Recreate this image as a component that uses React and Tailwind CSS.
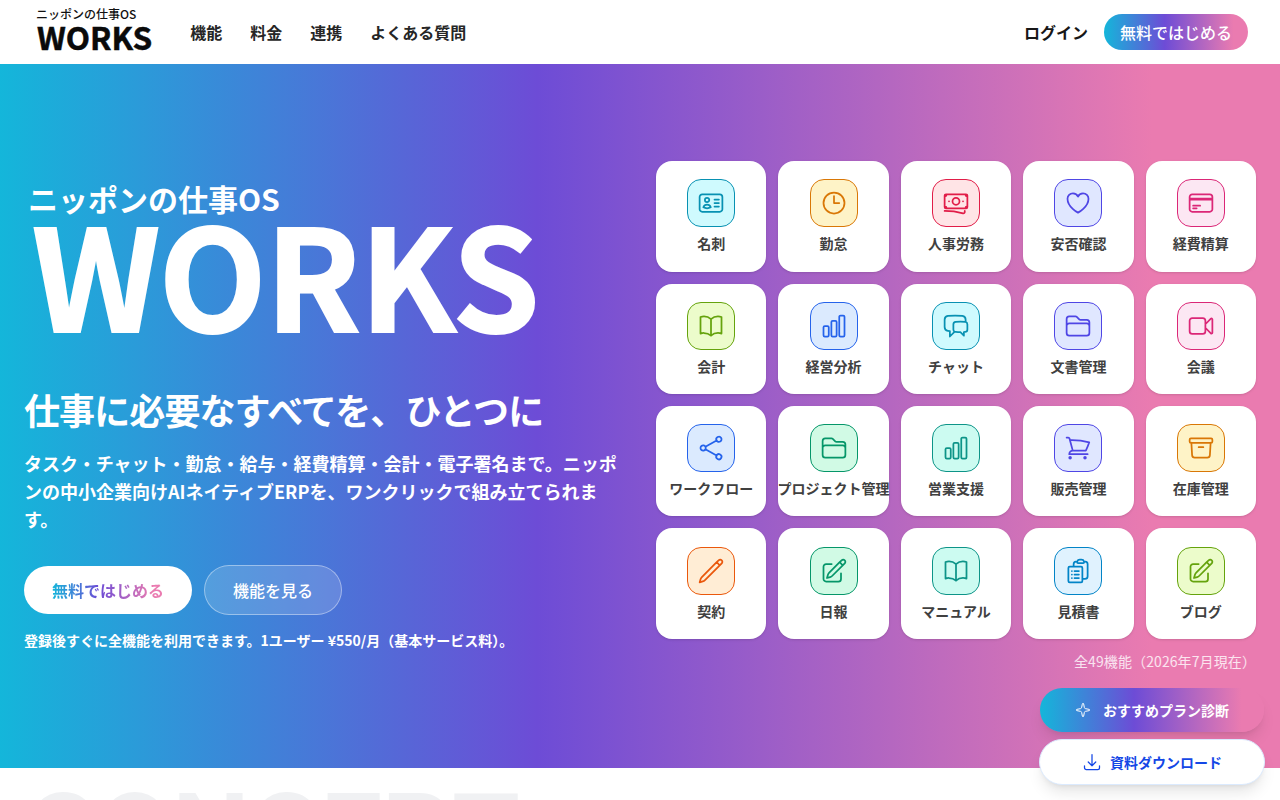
import {
  HiOutlineIdentification,
  HiOutlineClock,
  HiOutlineBanknotes,
  HiOutlineHeart,
  HiOutlineCreditCard,
  HiOutlineBookOpen,
  HiOutlineChartBar,
  HiOutlineChatBubbleLeftRight,
  HiOutlineFolder,
  HiOutlineVideoCamera,
  HiOutlineShare,
  HiOutlineShoppingCart,
  HiOutlineArchiveBox,
  HiOutlinePencil,
  HiOutlinePencilSquare,
  HiOutlineClipboardDocumentList,
  HiOutlineArrowDownTray,
} from 'react-icons/hi2';
import { Sparkle } from 'lucide-react';

const FONT = "font-['Noto_Sans_CJK_JP','Noto_Sans',sans-serif]";
const GRADIENT = 'bg-[linear-gradient(90deg,#14b6da_0%,#6d4cd6_42%,#ea7bb0_90%,#ea7bb0_100%)]';

const cyan = 'bg-[#cffafe] border-[#0891b2] text-[#0891b2]';
const amber = 'bg-[#fef3c7] border-[#d97706] text-[#d97706]';
const rose = 'bg-[#ffe4e6] border-[#e11d48] text-[#e11d48]';
const indigo = 'bg-[#e0e7ff] border-[#4f46e5] text-[#4f46e5]';
const pink = 'bg-[#fce7f3] border-[#db2777] text-[#db2777]';
const lime = 'bg-[#ecfccb] border-[#65a30d] text-[#65a30d]';
const blue = 'bg-[#dbeafe] border-[#2563eb] text-[#2563eb]';
const emerald = 'bg-[#d1fae5] border-[#059669] text-[#059669]';
const teal = 'bg-[#ccfbf1] border-[#0d9488] text-[#0d9488]';
const orange = 'bg-[#ffedd5] border-[#ea580c] text-[#ea580c]';
const sky = 'bg-[#e0f2fe] border-[#0284c7] text-[#0284c7]';

const features = [
  { label: '名刺', Icon: HiOutlineIdentification, color: cyan },
  { label: '勤怠', Icon: HiOutlineClock, color: amber },
  { label: '人事労務', Icon: HiOutlineBanknotes, color: rose },
  { label: '安否確認', Icon: HiOutlineHeart, color: indigo },
  { label: '経費精算', Icon: HiOutlineCreditCard, color: pink },
  { label: '会計', Icon: HiOutlineBookOpen, color: lime },
  { label: '経営分析', Icon: HiOutlineChartBar, color: blue },
  { label: 'チャット', Icon: HiOutlineChatBubbleLeftRight, color: cyan },
  { label: '文書管理', Icon: HiOutlineFolder, color: indigo },
  { label: '会議', Icon: HiOutlineVideoCamera, color: pink },
  { label: 'ワークフロー', Icon: HiOutlineShare, color: blue },
  { label: 'プロジェクト管理', Icon: HiOutlineFolder, color: emerald },
  { label: '営業支援', Icon: HiOutlineChartBar, color: teal },
  { label: '販売管理', Icon: HiOutlineShoppingCart, color: indigo },
  { label: '在庫管理', Icon: HiOutlineArchiveBox, color: amber },
  { label: '契約', Icon: HiOutlinePencil, color: orange },
  { label: '日報', Icon: HiOutlinePencilSquare, color: emerald },
  { label: 'マニュアル', Icon: HiOutlineBookOpen, color: teal },
  { label: '見積書', Icon: HiOutlineClipboardDocumentList, color: sky },
  { label: 'ブログ', Icon: HiOutlinePencilSquare, color: lime },
];

function Header() {
  return (
    <header className="h-16 bg-white flex items-center justify-between pl-9 pr-8">
      <div className="flex items-center gap-[38px]">
        <div className="flex flex-col -mt-[6px]">
          <span className="text-[12px] leading-[14px] font-medium text-[#111]">ニッポンの仕事OS</span>
          <span className="pl-px text-[31.5px] leading-[30px] font-bold [-webkit-text-stroke:0.5px_#0a0a0a] text-[#0a0a0a]">WORKS</span>
        </div>
        <nav className="flex items-center gap-7 text-base font-bold text-[#262626]">
          <a>機能</a>
          <a>料金</a>
          <a>連携</a>
          <a>よくある質問</a>
        </nav>
      </div>
      <div className="flex items-center gap-4">
        <a className="text-base font-bold text-[#171717]">ログイン</a>
        <a className={`h-9 w-36 flex items-center justify-center rounded-full text-base font-medium text-white ${GRADIENT}`}>無料ではじめる</a>
      </div>
    </header>
  );
}

function FeatureCard({ label, Icon, color }) {
  return (
    <div className="aspect-square bg-white rounded-2xl flex flex-col items-center justify-center gap-[6px] shadow-sm">
      <div className={`w-12 h-12 rounded-[14px] border flex items-center justify-center ${color}`}>
        <Icon className="w-7 h-7" />
      </div>
      <span className="text-sm font-bold text-[#404040] whitespace-nowrap leading-5">{label}</span>
    </div>
  );
}

function Hero() {
  return (
    <section className={`h-[704px] px-6 grid grid-cols-2 gap-8 items-center text-white ${GRADIENT}`}>
      <div className="flex flex-col items-start">
        <p className="pl-1 text-[30px] leading-9 font-bold">ニッポンの仕事OS</p>
        <p className="pl-2 -mt-1 text-[140px] leading-[118px] font-bold tracking-[-1px] [-webkit-text-stroke:2px_white]">WORKS</p>
        <h1 className="mt-[55px] text-4xl leading-[48px] font-bold tracking-tight">仕事に必要なすべてを、ひとつに</h1>
        <p className="mt-4 text-lg leading-7 font-bold">タスク・チャット・勤怠・給与・経費精算・会計・電子署名まで。ニッポンの中小企業向けAIネイティブERPを、ワンクリックで組み立てられます。</p>
        <div className="mt-8 flex items-center gap-3">
          <a className="h-12 w-[168px] flex items-center justify-center rounded-full bg-white text-base font-bold">
            <span className={`bg-clip-text text-transparent ${GRADIENT}`}>無料ではじめる</span>
          </a>
          <a className="h-[50px] w-[138px] flex items-center justify-center rounded-full border border-white/40 bg-white/15 text-base font-medium">機能を見る</a>
        </div>
        <p className="mt-[15px] mb-[2px] text-sm leading-5 font-bold">登録後すぐに全機能を利用できます。1ユーザー ¥550/月（基本サービス料）。</p>
      </div>
      <div className="flex flex-col">
        <div className="grid grid-cols-5 gap-3">
          {features.map((f) => (
            <FeatureCard key={f.label} {...f} />
          ))}
        </div>
        <p className="mt-3 text-right text-sm leading-5 tracking-[0.1px] text-white/80">全49機能（2026年7月現在）</p>
      </div>
    </section>
  );
}

export default function App() {
  return (
    <div className={`relative h-screen overflow-hidden bg-white ${FONT}`}>
      <Header />
      <Hero />
      <p className="pl-[26px] pt-3 font-['Roboto',sans-serif] text-[109px] leading-none font-bold text-[#f0f1f3]">CONCEPT</p>
      <div className="absolute right-[15px] bottom-[15px] w-[226px] flex flex-col gap-[7px]">
        <a className={`mx-px h-11 flex items-center justify-center gap-3 rounded-full text-sm font-bold text-white shadow-lg ${GRADIENT}`}>
          <Sparkle className="w-4 h-4" strokeWidth={1.5} />
          おすすめプラン診断
        </a>
        <a className="h-[46px] flex items-center justify-center gap-2 rounded-full bg-white border border-blue-100 text-sm font-bold text-blue-700 shadow-lg">
          <HiOutlineArrowDownTray className="w-5 h-5" />
          資料ダウンロード
        </a>
      </div>
    </div>
  );
}
